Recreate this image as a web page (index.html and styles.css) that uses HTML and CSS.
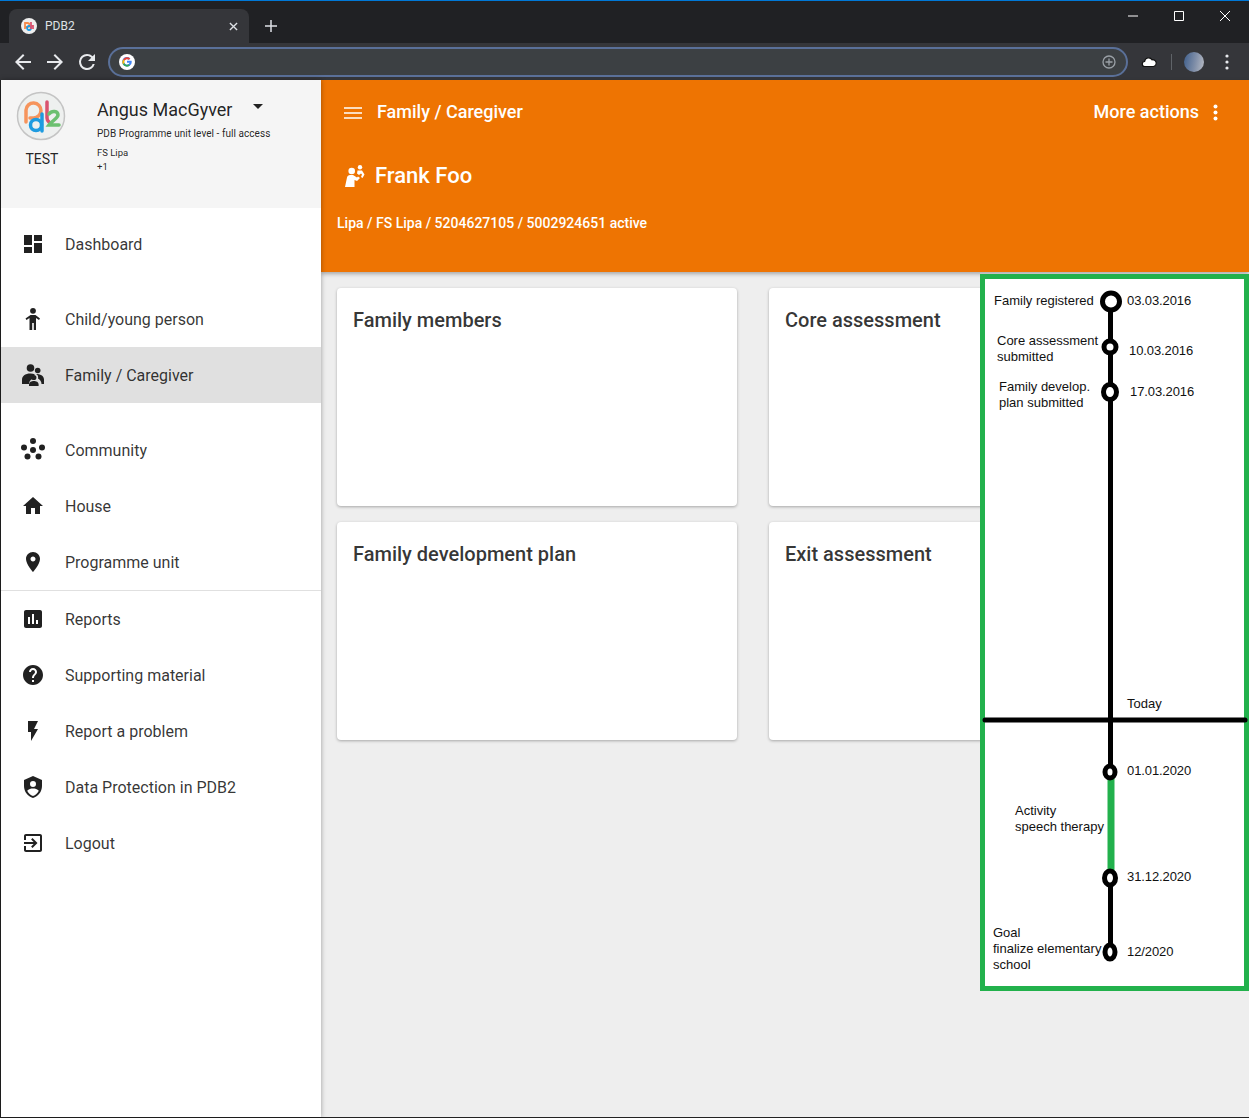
FILE: index.html
```html
<!DOCTYPE html>
<html lang="en">
<head>
  <meta charset="UTF-8">
  <title>PDB2</title>
  <link rel="stylesheet" href="styles.css">
</head>
<body>
  <div class="browser-top">
    <div class="tabstrip">
      <div class="tab">
        <svg class="favicon" viewBox="0 0 16 16">
          <circle cx="8" cy="8" r="8" fill="#eee"/>
          <path d="M4 11V5h2.500a2 2 0 0 1 0 4H4" fill="none" stroke="#f58a4b" stroke-width="1.800"/>
          <circle cx="8" cy="10" r="2" fill="none" stroke="#1e9be0" stroke-width="1.800"/>
          <path d="M10 11V4M10 8h2v3" fill="none" stroke="#d9536f" stroke-width="1.800"/>
        </svg>
        <span class="tab-title">PDB2</span>
        <svg class="tab-close" viewBox="0 0 10 10"><path d="M1 1l8 8M9 1l-8 8" stroke="#dee1e6" stroke-width="1.500"/></svg>
      </div>
      <svg class="new-tab" viewBox="0 0 12 12"><path d="M6 0v12M0 6h12" stroke="#dee1e6" stroke-width="1.500"/></svg>
      <div class="window-controls">
        <svg viewBox="0 0 10 10"><path d="M0 5h10" stroke="#fff"/></svg>
        <svg viewBox="0 0 10 10"><path d="M.5.5h9v9h-9z" fill="none" stroke="#fff"/></svg>
        <svg viewBox="0 0 10 10"><path d="M0 0l10 10M10 0L0 10" stroke="#fff"/></svg>
      </div>
    </div>
    <div class="toolbar">
      <svg class="tool-icon" viewBox="0 0 24 24"><path d="M20 11H7.830l5.590-5.590L12 4l-8 8 8 8 1.410-1.410L7.830 13H20z" fill="#e8eaed"/></svg>
      <svg class="tool-icon" viewBox="0 0 24 24"><path d="M12 4l-1.410 1.410L16.170 11H4v2h12.170l-5.580 5.590L12 20l8-8z" fill="#e8eaed"/></svg>
      <svg class="tool-icon" viewBox="0 0 24 24"><path d="M17.650 6.350A7.960 7.960 0 0 0 12 4a8 8 0 1 0 7.730 10h-2.080A6 6 0 1 1 12 6c1.660 0 3.140.69 4.220 1.780L13 11h7V4z" fill="#e8eaed"/></svg>
      <div class="omnibox">
        <svg class="g-logo" viewBox="0 0 16 16">
          <circle cx="8" cy="8" r="8" fill="#fff"/>
          <path d="M12.600 6.800H8v1.900h2.600A2.800 2.800 0 1 1 9.900 5.800l1.400-1.400A4.800 4.800 0 1 0 12.600 6.800z" fill="#4285f4"/>
          <path d="M4.100 5.400a4.800 4.800 0 0 1 7.200-1l-1.400 1.400a2.800 2.800 0 0 0-4.200.7z" fill="#ea4335"/>
          <path d="M3.800 10.300a4.800 4.800 0 0 1 .3-4.900l1.600 1.100a2.800 2.800 0 0 0-.2 2.800z" fill="#fbbc05"/>
          <path d="M5.500 9.300a2.800 2.800 0 0 0 4 1l1.500 1.300a4.800 4.800 0 0 1-7.200-1.300z" fill="#34a853"/>
        </svg>
        <svg class="add-icon" viewBox="0 0 14 14"><circle cx="7" cy="7" r="6" fill="none" stroke="#9aa0a6" stroke-width="1.300"/><path d="M7 3.500v7M3.500 7h7" stroke="#9aa0a6" stroke-width="1.300"/></svg>
      </div>
      <svg class="cloud" viewBox="0 0 16 12"><path d="M4 10.500a2.500 2.500 0 0 1-.4-5A4 4 0 0 1 11 3.800a3.300 3.300 0 0 1 1.500 6.700z" fill="#fff" stroke="#111" stroke-width="1.200"/></svg>
      <span class="tool-sep"></span>
      <span class="avatar"></span>
      <svg class="chrome-menu" viewBox="0 0 4 16"><circle cx="2" cy="2" r="1.600" fill="#e8eaed"/><circle cx="2" cy="8" r="1.600" fill="#e8eaed"/><circle cx="2" cy="14" r="1.600" fill="#e8eaed"/></svg>
    </div>
  </div>

  <div class="app">
    <aside class="sidebar">
      <div class="profile">
        <div class="profile-logo">
          <svg class="logo" viewBox="0 0 50 50">
            <circle cx="25" cy="25" r="23.500" fill="#eef0ef" stroke="#c4c4c4" stroke-width="1.500"/>
            <path d="M10 31V19a7.500 7.500 0 1 1 7.500 8H14" fill="none" stroke="#f6945c" stroke-width="3.500" stroke-linecap="round"/>
            <circle cx="20" cy="34" r="5.500" fill="none" stroke="#1e9be0" stroke-width="3.500"/>
            <path d="M26 23V40" fill="none" stroke="#1e9be0" stroke-width="3.500" stroke-linecap="round"/>
            <path d="M31 11V27a5 5 0 0 0 2 4" fill="none" stroke="#d9536f" stroke-width="3.500" stroke-linecap="round"/>
            <path d="M33 23c3-4 9-3 9 1 0 3-6 6-9 10h10" fill="none" stroke="#6cc070" stroke-width="3.500" stroke-linecap="round"/>
          </svg>
          <span class="logo-label">TEST</span>
        </div>
        <div class="profile-info">
          <div class="profile-name">Angus MacGyver <span class="caret"></span></div>
          <div class="profile-role">PDB Programme unit level - full access</div>
          <div class="profile-unit">FS Lipa<br>+1</div>
        </div>
      </div>

      <nav class="nav">
        <div class="nav-group">
          <a class="nav-item"><svg class="nav-icon" viewBox="0 0 24 24"><path d="M3 13h8V3H3v10zm0 8h8v-6H3v6zm10 0h8V11h-8v10zm0-18v6h8V3h-8z"/></svg>Dashboard</a>
        </div>
        <div class="nav-group">
          <a class="nav-item"><svg class="nav-icon" viewBox="0 0 24 24"><circle cx="12" cy="3.800" r="2.900"/><path d="M9.500 8h5l4.500 3.500-1 1.400-3-2V23h-2.200v-7h-1.600v7H8.500V10.900l-3 2-1-1.400z"/></svg>Child/young person</a>
          <a class="nav-item active"><svg class="nav-icon" viewBox="0 0 24 24"><circle cx="9.500" cy="5" r="3.800"/><circle cx="16.700" cy="7.500" r="2.800"/><path d="M1 21v-4c0-4 3-6.500 8.500-6.500 1.600 0 3 .2 4.200.7a4.300 4.300 0 0 0-.4 4.300A6 6 0 0 0 8 21z"/><path d="M15 11c4 0 8 1.700 8 5.500V21h-2.500c0-2.500-1.500-4.500-3.500-5.500a4 4 0 0 0-2-4.500z"/><circle cx="12.800" cy="14.500" r="2.600"/><path d="M8 23v-1.500c0-2.500 2.500-3.500 4.800-3.500s4.800 1 4.800 3.500V23z"/></svg>Family / Caregiver</a>
        </div>
        <div class="nav-group">
          <a class="nav-item"><svg class="nav-icon" viewBox="0 0 24 24"><circle cx="12" cy="3" r="3"/><circle cx="3" cy="9.500" r="3"/><circle cx="21" cy="9.500" r="3"/><circle cx="12" cy="12" r="3"/><circle cx="6.500" cy="18.500" r="3"/><circle cx="17.500" cy="18.500" r="3"/></svg>Community</a>
          <a class="nav-item"><svg class="nav-icon" viewBox="0 0 24 24"><path d="M10 20v-6h4v6h5v-8h3L12 3 2 12h3v8z"/></svg>House</a>
          <a class="nav-item"><svg class="nav-icon" viewBox="0 0 24 24"><path d="M12 2C8.130 2 5 5.130 5 9c0 5.250 7 13 7 13s7-7.750 7-13c0-3.870-3.130-7-7-7zm0 9.500c-1.380 0-2.500-1.120-2.500-2.500s1.120-2.500 2.500-2.500 2.500 1.120 2.500 2.500-1.120 2.500-2.500 2.500z"/></svg>Programme unit</a>
        </div>
        <div class="nav-group nav-divided">
          <a class="nav-item"><svg class="nav-icon" viewBox="0 0 24 24"><path d="M19 3H5c-1.100 0-2 .9-2 2v14c0 1.100.9 2 2 2h14c1.100 0 2-.9 2-2V5c0-1.100-.9-2-2-2zM9 17H7v-7h2v7zm4 0h-2V7h2v10zm4 0h-2v-4h2v4z"/></svg>Reports</a>
          <a class="nav-item"><svg class="nav-icon" viewBox="0 0 24 24"><path d="M12 2C6.480 2 2 6.480 2 12s4.480 10 10 10 10-4.480 10-10S17.520 2 12 2zm1 17h-2v-2h2v2zm2.070-7.750l-.9.920C13.450 12.900 13 13.500 13 15h-2v-.5c0-1.100.45-2.100 1.170-2.830l1.240-1.260c.37-.36.59-.86.59-1.410 0-1.100-.9-2-2-2s-2 .9-2 2H8c0-2.210 1.790-4 4-4s4 1.790 4 4c0 .88-.36 1.680-.93 2.250z"/></svg>Supporting material</a>
          <a class="nav-item"><svg class="nav-icon" viewBox="0 0 24 24"><path d="M7 2v11h3v9l7-12h-4l4-8z"/></svg>Report a problem</a>
          <a class="nav-item"><svg class="nav-icon" viewBox="0 0 24 24"><path fill-rule="evenodd" d="M12 1L3 5v6c0 5.550 3.840 10.740 9 12 5.160-1.260 9-6.450 9-12V5l-9-4zm0 5a3 3 0 1 1 0 6 3 3 0 0 1 0-6zm0 15c-2.500-.8-4.600-2.800-5.800-5.300C7.500 14 10 13.500 12 13.500s4.500.5 5.800 2.200c-1.200 2.500-3.300 4.500-5.800 5.300z"/></svg>Data Protection in PDB2</a>
          <a class="nav-item"><svg class="nav-icon" viewBox="0 0 24 24"><path d="M10.090 15.590L11.500 17l5-5-5-5-1.410 1.410L12.670 11H3v2h9.670l-2.580 2.590zM19 3H5c-1.110 0-2 .9-2 2v4h2V5h14v14H5v-4H3v4c0 1.100.89 2 2 2h14c1.100 0 2-.9 2-2V5c0-1.100-.9-2-2-2z"/></svg>Logout</a>
        </div>
      </nav>
    </aside>

    <div class="content">
      <header class="page-header">
        <div class="header-row">
          <svg class="menu-icon" viewBox="0 0 18 12"><path d="M0 1h18M0 6h18M0 11h18" stroke="#fff" stroke-width="1.600"/></svg>
          <span class="header-title">Family / Caregiver</span>
          <span class="more-actions">More actions</span>
          <svg class="more-icon" viewBox="0 0 5 17"><circle cx="2.500" cy="2.500" r="2"/><circle cx="2.500" cy="8.500" r="2"/><circle cx="2.500" cy="14.500" r="2"/></svg>
        </div>
        <div class="person-row">
          <svg class="person-icon" viewBox="0 0 20 22"><circle cx="6.700" cy="6" r="3.300"/><circle cx="15" cy="2.200" r="2.200"/><path d="M0 22l2-9.500c.3-1.500 1.500-2.500 3-2.500h3l4 2.500 1-1 2 1.500-3 3-2.500-1V22z"/><path d="M12.500 5.500H17l2.500 4-2 3.500-1.500-1 1-2.500-1-1-2 1.500-2-1.500z"/></svg>
          <span class="person-name">Frank Foo</span>
        </div>
        <div class="person-meta">Lipa / FS Lipa / 5204627105 / 5002924651 active</div>
      </header>

      <main class="cards">
        <section class="card"><h2 class="card-title">Family members</h2></section>
        <section class="card"><h2 class="card-title">Core assessment</h2></section>
        <section class="card"><h2 class="card-title">Family development plan</h2></section>
        <section class="card"><h2 class="card-title">Exit assessment</h2></section>
      </main>
    </div>

    <!-- timeline annotation, coordinates are relative to the box -->
    <div class="timeline">
      <svg class="timeline-svg" viewBox="0 0 269 717" width="269" height="717">
        <path class="tl-line" d="M130.500 28V677"/>
        <path class="tl-today" d="M5 446H265"/>
        <path class="tl-activity" d="M131 500V604"/>
        <ellipse class="tl-dot" cx="131" cy="27.500" rx="8.500" ry="8.500"/>
        <ellipse class="tl-dot" cx="130" cy="73" rx="6" ry="6"/>
        <ellipse class="tl-dot" cx="130" cy="118" rx="6.500" ry="7.500"/>
        <ellipse class="tl-dot" cx="130" cy="498" rx="5" ry="6"/>
        <ellipse class="tl-dot" cx="130" cy="604" rx="5.500" ry="7"/>
        <ellipse class="tl-dot" cx="130" cy="678" rx="5" ry="7"/>

        <text class="tl-text" x="14" y="31">Family registered</text>
        <text class="tl-text tl-date" x="147" y="31">03.03.2016</text>
        <text class="tl-text" x="17" y="71">Core assessment</text>
        <text class="tl-text" x="17" y="87">submitted</text>
        <text class="tl-text tl-date" x="149" y="81">10.03.2016</text>
        <text class="tl-text" x="19" y="117">Family develop.</text>
        <text class="tl-text" x="19" y="133">plan submitted</text>
        <text class="tl-text tl-date" x="150" y="122">17.03.2016</text>
        <text class="tl-text" x="147" y="434">Today</text>
        <text class="tl-text tl-date" x="147" y="501">01.01.2020</text>
        <text class="tl-text" x="35" y="541">Activity</text>
        <text class="tl-text" x="35" y="557">speech therapy</text>
        <text class="tl-text tl-date" x="147" y="607">31.12.2020</text>
        <text class="tl-text" x="13" y="663">Goal</text>
        <text class="tl-text" x="13" y="679">finalize elementary</text>
        <text class="tl-text" x="13" y="695">school</text>
        <text class="tl-text tl-date" x="147" y="682">12/2020</text>
      </svg>
    </div>
  </div>
</body>
</html>
```

FILE: styles.css
```css
html, body {
  margin: 0;
  height: 1118px;
  overflow: hidden;
}
body {
  font-family: Roboto, sans-serif;
  color: rgba(0, 0, 0, 0.87);
  background: #eee;
  display: flex;
  flex-direction: column;
}

/* browser chrome */
.browser-top {
  height: 80px;
  flex: none;
  border-top: 1px solid #0078d7;
  box-sizing: border-box;
  background: #202124;
}
.tabstrip {
  height: 42px;
  display: flex;
  align-items: flex-end;
  padding-left: 9px;
}
.tab {
  width: 240px;
  height: 34px;
  box-sizing: border-box;
  background: #35363a;
  border-radius: 8px 8px 0 0;
  display: flex;
  align-items: center;
  padding: 0 11px 0 12px;
  color: #dee1e6;
  font-size: 12px;
}
.favicon {
  width: 16px;
  height: 16px;
}
.tab-title {
  margin-left: 8px;
  flex: 1;
}
.tab-close {
  width: 9px;
  height: 9px;
}
.new-tab {
  width: 12px;
  height: 12px;
  margin: 0 0 11px 16px;
}
.window-controls {
  margin-left: auto;
  align-self: flex-start;
  display: flex;
  gap: 36px;
  padding: 10px 19px 0 0;
}
.window-controls svg {
  width: 10px;
  height: 10px;
}
.toolbar {
  height: 37px;
  background: #35363a;
  display: flex;
  align-items: center;
  padding-left: 11px;
}
.tool-icon {
  width: 24px;
  height: 24px;
  margin-right: 8px;
}
.omnibox {
  width: 1020px;
  height: 30px;
  box-sizing: border-box;
  margin-left: 1px;
  border: 2px solid #5a7099;
  border-radius: 15px;
  background: #3c4043;
  display: flex;
  align-items: center;
  justify-content: space-between;
  padding: 0 10px 0 9px;
}
.g-logo {
  width: 16px;
  height: 16px;
}
.add-icon {
  width: 14px;
  height: 14px;
}
.cloud {
  width: 16px;
  height: 12px;
  margin-left: 13px;
}
.tool-sep {
  width: 1px;
  height: 16px;
  background: #5f6368;
  margin-left: 14px;
}
.avatar {
  width: 20px;
  height: 20px;
  border-radius: 50%;
  margin-left: 12px;
  background: linear-gradient(100deg, #3f5f8c, #7f8ea8 55%, #b9bcc4);
}
.chrome-menu {
  width: 4px;
  height: 16px;
  margin-left: 21px;
}

/* app */
.app {
  flex: 1;
  display: flex;
  position: relative;
  border-left: 1px solid #222;
  border-bottom: 1px solid #222;
  min-height: 0;
}
.sidebar {
  width: 320px;
  flex: none;
  background: #fff;
  box-shadow: 0 0 5px rgba(0, 0, 0, 0.35);
  z-index: 2;
}
.profile {
  height: 128px;
  box-sizing: border-box;
  background: #f5f5f5;
  display: flex;
  padding-top: 12px;
}
.profile-logo {
  width: 80px;
  flex: none;
  display: flex;
  flex-direction: column;
  align-items: center;
  margin-right: 16px;
}
.logo {
  width: 50px;
  height: 50px;
  margin-top: -1px;
}
.logo-label {
  margin-top: 9px;
  margin-left: 2px;
  font-size: 14px;
  line-height: 18px;
}
.profile-info {
  padding-top: 6px;
}
.profile-name {
  font-size: 18px;
  line-height: 24px;
  position: relative;
}
.caret {
  position: absolute;
  left: 156px;
  top: 6px;
  border-left: 5px solid transparent;
  border-right: 5px solid transparent;
  border-top: 5px solid #222;
}
.profile-role {
  font-size: 10px;
  line-height: 14px;
  margin-top: 5px;
  letter-spacing: 0.05px;
}
.profile-unit {
  font-size: 9.500px;
  line-height: 14px;
  margin-top: 5px;
}
.nav {
  padding-top: 8px;
}
.nav-group {
  margin-bottom: 19px;
}
.nav-group:nth-child(3) {
  margin-bottom: 0;
}
.nav-divided {
  border-top: 1px solid #e0e0e0;
}
.nav-item {
  height: 56px;
  display: flex;
  align-items: center;
  font-size: 16px;
  color: rgba(0, 0, 0, 0.8);
}
.nav-item.active {
  background: #e0e0e0;
}
.nav-icon {
  width: 24px;
  height: 24px;
  margin: 0 20px;
  flex: none;
  fill: #212121;
}

.content {
  flex: 1;
  min-width: 0;
  display: flex;
  flex-direction: column;
}
.page-header {
  height: 192px;
  box-sizing: border-box;
  background: #ee7402;
  color: #fff;
  box-shadow: 0 2px 4px rgba(0, 0, 0, 0.3);
  padding: 0 16px;
  font-weight: 500;
}
.header-row {
  height: 62px;
  display: flex;
  align-items: center;
}
.menu-icon {
  width: 18px;
  height: 12px;
  margin: 4px 15px 0 7px;
}
.header-title {
  font-size: 18px;
}
.more-actions {
  margin-left: auto;
  font-size: 18px;
}
.more-icon {
  width: 5px;
  height: 17px;
  margin: 2px 15px 0 14px;
  fill: #fff;
}
.person-row {
  display: flex;
  align-items: center;
  height: 32px;
  margin-top: 17px;
}
.person-icon {
  width: 20px;
  height: 22px;
  margin: 2px 10px 0 8px;
  fill: #fff;
}
.person-name {
  font-size: 22px;
}
.person-meta {
  font-size: 14px;
  margin-top: 24px;
}
.cards {
  display: grid;
  grid-template-columns: 400px 400px;
  grid-auto-rows: 218px;
  gap: 16px 32px;
  padding: 16px;
}
.card {
  background: #fff;
  border-radius: 4px;
  box-shadow: 0 1px 3px rgba(0, 0, 0, 0.3);
  padding: 16px;
}
.card-title {
  margin: 4px 0 0;
  font-size: 20px;
  font-weight: 500;
  line-height: 24px;
  color: rgba(0, 0, 0, 0.8);
}

/* timeline annotation over the page */
.timeline {
  position: absolute;
  left: 979px;
  top: 194px;
  width: 269px;
  height: 717px;
  box-sizing: border-box;
  border: 5px solid #22b14c;
  background: #fff;
  z-index: 3;
}
.timeline-svg {
  position: absolute;
  left: -5px;
  top: -5px;
  overflow: visible;
}
.tl-line {
  stroke: #000;
  stroke-width: 5;
  fill: none;
}
.tl-today {
  stroke: #000;
  stroke-width: 5;
  stroke-linecap: round;
  fill: none;
}
.tl-activity {
  stroke: #22b14c;
  stroke-width: 7;
  fill: none;
}
.tl-dot {
  fill: #fff;
  stroke: #000;
  stroke-width: 5;
}
.tl-text {
  font-family: "Liberation Sans", Arial, sans-serif;
  font-size: 13px;
  fill: #111;
}
.tl-date {
  letter-spacing: -0.1px;
}
```
